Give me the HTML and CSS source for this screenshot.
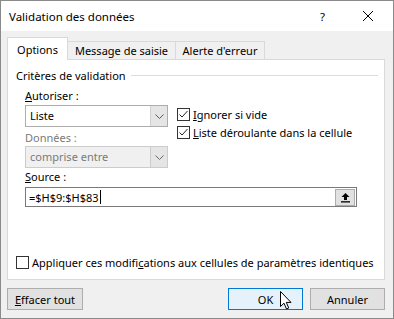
FILE: index.html
```html
<!DOCTYPE html>
<html lang="fr">
<head>
<meta charset="utf-8">
<link rel="stylesheet" href="styles.css">
</head>
<body>
<div class="window">
  <div class="titlebar">
    <span class="title">Validation des données</span>
    <span class="help">?</span>
    <svg class="close" width="12" height="12" viewBox="0 0 12 12"><path d="M1 1 L11 11 M11 1 L1 11" stroke="#000" stroke-width="1" fill="none"/></svg>
  </div>
  <div class="content">
    <div class="tabs">
      <div class="tab active t1">Options</div>
      <div class="tab t2">Message de saisie</div>
      <div class="tab t3">Alerte d'erreur</div>
    </div>
    <div class="panel">
      <div class="group-title"><span>Critères de validation</span><span class="rule"></span></div>
      <div class="criteria">
        <div class="left">
          <div class="label first"><u>A</u>utoriser :</div>
          <div class="select">
            <span class="value">Liste</span>
            <span class="drop"><svg width="9" height="5" viewBox="0 0 9 5"><path d="M0.5 0.5 L4.5 4.5 L8.5 0.5" stroke="#5a5a5a" fill="none"/></svg></span>
          </div>
          <div class="label disabled">Données :</div>
          <div class="select dis">
            <span class="value">comprise entre</span>
            <span class="drop"><svg width="9" height="5" viewBox="0 0 9 5"><path d="M0.5 0.5 L4.5 4.5 L8.5 0.5" stroke="#6a6a6a" fill="none"/></svg></span>
          </div>
        </div>
        <div class="right">
          <div class="check"><span class="box"><svg width="11" height="11" viewBox="0 0 11 11"><path d="M1.5 5.5 L4 8 L9.5 2" stroke="#222" stroke-width="1" fill="none"/></svg></span><span><u>I</u>gnorer si vide</span></div>
          <div class="check"><span class="box"><svg width="11" height="11" viewBox="0 0 11 11"><path d="M1.5 5.5 L4 8 L9.5 2" stroke="#222" stroke-width="1" fill="none"/></svg></span><span><u>L</u>iste déroulante dans la cellule</span></div>
        </div>
      </div>
      <div class="label src"><u>S</u>ource :</div>
      <div class="input">
        <span class="value">=$H$9:$H$83<span class="caret"></span></span>
        <span class="pick"><svg width="11" height="11" viewBox="0 0 11 11"><path d="M5.5 1 L1.5 5 L4 5 L4 8 L7 8 L7 5 L9.5 5 Z" fill="#000"/><rect x="1" y="9.2" width="9" height="1.3" fill="#000"/></svg></span>
      </div>
      <div class="check apply"><span class="box"></span><span>Appliquer ces modifi<u>c</u>ations aux cellules de paramètres identiques</span></div>
    </div>
    <div class="buttons">
      <button class="btn"><u>E</u>ffacer tout</button>
      <div class="spacer"></div>
      <button class="btn ok">OK</button>
      <button class="btn">Annuler</button>
      <svg class="cursor" width="13" height="20" viewBox="0 0 13 20"><path d="M0.5 0.5 L0.5 15.5 L4 12.2 L6.5 18 L8.7 17 L6.3 11.4 L11 11.4 Z" fill="#fff" stroke="#000" stroke-width="1" stroke-linejoin="miter"/></svg>
    </div>
  </div>
</div>
</body>
</html>
```
FILE: styles.css
```css
* { box-sizing: border-box; }
html, body { margin: 0; padding: 0; }
body {
  font-family: "Noto Sans", "Open Sans", sans-serif;
  font-size: 11px;
  color: #000;
  background: #fff;
}
.window {
  width: 394px;
  height: 319px;
  border: 1px solid #8a8a8a;
  background: #f0f0f0;
  display: flex;
  flex-direction: column;
  position: relative;
}
.titlebar {
  height: 30px;
  background: #fff;
  display: flex;
  align-items: center;
  padding-left: 8px;
  font-size: 11.5px;
}
.title { flex: 1; }
.help { width: 10px; margin-right: 32px; }
.close { margin-right: 19px; }
.content {
  flex: 1;
  padding: 6px 8px 0 6px;
  display: flex;
  flex-direction: column;
}
.tabs {
  display: flex;
  align-items: flex-end;
  height: 22px;
  position: relative;
  z-index: 1;
}
.tab {
  height: 18px;
  border: 1px solid #d9d9d9;
  border-bottom: none;
  border-left: none;
  line-height: 17px;
  text-align: center;
  background: #f0f0f0;
}
.t1 { width: 61px; }
.t2 { width: 108px; }
.t3 { width: 89px; }
.tab.active {
  height: 23px;
  margin-bottom: -1px;
  border-left: 1px solid #d9d9d9;
  background: #fff;
  padding-top: 3px;
  line-height: 17px;
}
.panel {
  height: 221px;
  background: #fff;
  border: 1px solid #d9d9d9;
  padding: 7px 0 0 8px;
}
.group-title {
  display: flex;
  align-items: center;
  height: 16px;
}
.group-title .rule {
  flex: 1;
  height: 1px;
  background: #dcdcdc;
  margin: 1px 6px 0 5px;
}
.criteria {
  display: flex;
  padding-left: 9px;
  margin-top: 5px;
}
.left { width: 143px; }
.label { height: 16px; line-height: 16px; margin-top: 3px; }
.label.first { margin-top: 0; margin-bottom: 1px; }
.label.disabled { color: #7a7a7a; }
.select {
  width: 143px;
  height: 22px;
  border: 1px solid #adadad;
  display: flex;
  background: #fff;
}
.select .value { flex: 1; padding-left: 4px; line-height: 20px; }
.select .drop {
  width: 17px;
  background: #e5e5e5;
  border-left: 1px solid #d0d0d0;
  display: flex;
  align-items: center;
  justify-content: center;
}
.select.dis { background: #f0f0f0; border-color: #cccccc; color: #7a7a7a; }
.select.dis .drop { background: #e5e5e5; border-left-color: #cccccc; }
.right { padding-left: 9px; padding-top: 17px; }
.check {
  display: flex;
  align-items: center;
  height: 18px;
}
.box {
  width: 13px;
  height: 13px;
  border: 1px solid #333;
  background: #fff;
  margin-right: 3px;
  display: flex;
  align-items: center;
  justify-content: center;
  flex: none;
}
.label.src { margin-top: 1px; padding-left: 9px; }
.input {
  margin-left: 9px;
  margin-top: 2px;
  width: 332px;
  height: 20px;
  border: 1px solid #7a7a7a;
  display: flex;
  align-items: center;
  padding-right: 1px;
}
.input .value { flex: 1; padding-left: 3px; display: flex; align-items: center; }
.caret { display: inline-block; width: 1px; height: 14px; background: #000; margin-left: 1px; }
.pick {
  width: 20px;
  height: 17px;
  background: #e1e1e1;
  border: 1px solid #adadad;
  display: flex;
  align-items: center;
  justify-content: center;
}
.check.apply { margin-top: 46px; }
.buttons {
  display: flex;
  align-items: flex-start;
  padding-top: 8px;
  position: relative;
}
.btn {
  font: inherit;
  height: 22px;
  width: 76px;
  background: #e1e1e1;
  border: 1px solid #adadad;
  padding: 0;
  color: #000;
}
.spacer { flex: 1; }
.btn.ok {
  width: 75px;
  background: #e5f1fb;
  border-color: #0078d7;
  margin-right: 7px;
}
.buttons .btn:last-of-type { width: 75px; }
.cursor { position: absolute; left: 273px; top: 11px; }
```
